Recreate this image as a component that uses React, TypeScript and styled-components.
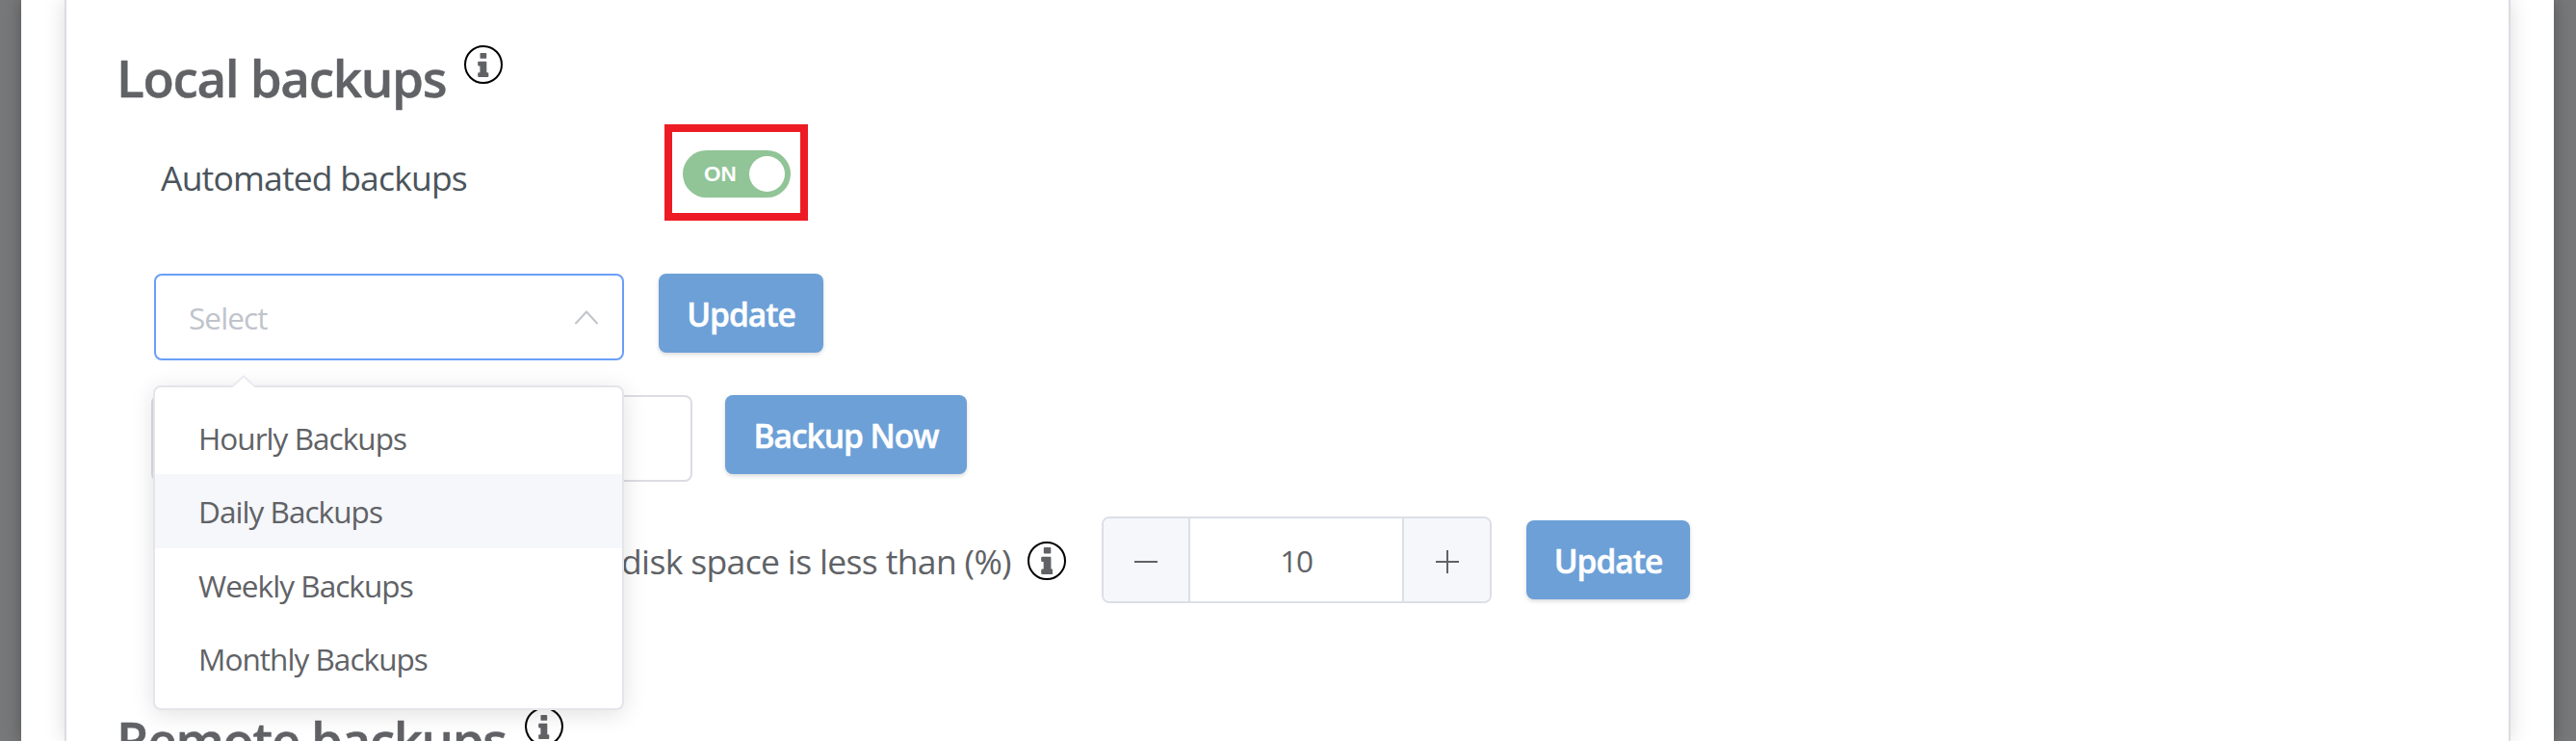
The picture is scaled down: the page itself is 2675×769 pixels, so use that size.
import React from "react";
import styled, { createGlobalStyle } from "styled-components";

const GlobalStyle = createGlobalStyle`
  *, *::before, *::after { box-sizing: border-box; }
  html, body { margin: 0; padding: 0; }
  body {
    background: #77787a;
    font-family: "Open Sans", "Noto Sans", sans-serif;
    color: #606266;
    overflow: hidden;
  }
`;

const Modal = styled.div`
  height: 769px;
  margin: 0 23px 0 22px;
  padding: 0 45px;
  background: #fff;
  box-shadow: 0 0 16px rgba(0, 0, 0, 0.3);
`;

const Card = styled.main`
  height: 769px;
  padding-top: 45px;
  background: #fff;
  border: solid #dcdce3;
  border-width: 0 2px;
  box-shadow: 0 0 20px rgba(0, 0, 0, 0.15);
  clip-path: inset(0 -24px);
`;

const HeadingRow = styled.header<{ $top?: number }>`
  display: flex;
  align-items: flex-start;
  height: 72px;
  margin: ${(p) => p.$top ?? 0}px 0 0 52px;
`;

const Heading = styled.h2<{ $width: number; $tracking: number }>`
  flex: none;
  width: ${(p) => p.$width}px;
  margin: 0;
  font-size: 53px;
  font-weight: 600;
  line-height: 72px;
  letter-spacing: ${(p) => p.$tracking}px;
  white-space: nowrap;
  -webkit-text-stroke: 0.4px currentColor;
`;

const Circle = styled.span<{ $top?: number }>`
  flex: none;
  display: flex;
  align-items: center;
  justify-content: center;
  width: 40px;
  height: 40px;
  margin-top: ${(p) => p.$top ?? 0}px;
  border: 2px solid #000;
  border-radius: 50%;
`;

const Row = styled.div<{ $top: number; $left: number; $center?: boolean }>`
  display: flex;
  align-items: ${(p) => (p.$center ? "center" : "flex-start")};
  margin: ${(p) => p.$top}px 0 0 ${(p) => p.$left}px;
`;

const ToggleLabel = styled.span`
  flex: none;
  width: 523px;
  padding-top: 31px;
  color: #4b545c;
  font-size: 35.5px;
  letter-spacing: -0.82px;
  white-space: nowrap;
`;

const Highlight = styled.div`
  flex: none;
  width: 149px;
  height: 100px;
  padding: 19px 0 0 11px;
  border: 8px solid #ed1c24;
`;

const Toggle = styled.div`
  display: flex;
  align-items: center;
  justify-content: space-between;
  width: 112px;
  height: 49px;
  padding: 0 6px 0 22px;
  border-radius: 25px;
  background: #91c497;
  color: #fff;
  font: 700 22.5px/50px "Liberation Sans", Arial, sans-serif;
`;

const Knob = styled.span`
  width: 37px;
  height: 37px;
  border-radius: 50%;
  background: #fff;
`;

const Select = styled.div`
  position: relative;
  display: flex;
  align-items: center;
  justify-content: space-between;
  width: 488px;
  height: 90px;
  margin-right: 36px;
  padding: 0 24px 0 34px;
  border: 2px solid #6a9ff8;
  border-radius: 8px;
  color: #c0c4cc;
  font-size: 31.5px;
  letter-spacing: -0.9px;
`;

const Menu = styled.ul`
  position: absolute;
  z-index: 2;
  top: 114px;
  left: -3px;
  width: 489px;
  height: 337px;
  margin: 0;
  padding: 14px 0 0;
  list-style: none;
  background: #fff;
  border: 2px solid #e4e4eb;
  border-radius: 8px;
  box-shadow: 0 4px 24px rgba(0, 0, 0, 0.12);
  color: #606266;
`;

const Arrow = styled.svg`
  position: absolute;
  top: -13px;
  left: 79px;
  display: block;
`;

const Option = styled.li<{ $active?: boolean }>`
  height: 76.4px;
  padding-left: 45px;
  line-height: 77.4px;
  letter-spacing: -0.95px;
  background: ${(p) => (p.$active ? "#f5f7fa" : "transparent")};
`;

const Button = styled.button<{ $width: number }>`
  flex: none;
  width: ${(p) => p.$width}px;
  height: 82px;
  padding: 2px 0 0;
  border: 0;
  border-radius: 8px;
  background: #6ca0d7;
  box-shadow: 0 2px 4px rgba(0, 0, 0, 0.15);
  color: #fff;
  font: 600 33.5px/80px "Open Sans", sans-serif;
  letter-spacing: -1px;
  -webkit-text-stroke: 0.5px currentColor;
`;

const NameInput = styled.div`
  width: 562px;
  height: 90px;
  margin-right: 34px;
  border: 2px solid #dcdce3;
  border-radius: 8px;
`;

const ThresholdLabel = styled.span`
  flex: none;
  width: 422px;
  padding-top: 2px;
  font-size: 35.5px;
  letter-spacing: -0.65px;
  white-space: nowrap;
`;

const Stepper = styled.div`
  display: grid;
  grid-template-columns: 90px 220px 91px;
  width: 405px;
  height: 90px;
  margin: 0 36px 0 37px;
  border: 2px solid #dcdfe6;
  border-radius: 8px;
  overflow: hidden;
`;

const StepButton = styled.span<{ $side: "left" | "right" }>`
  display: flex;
  align-items: center;
  justify-content: center;
  padding-top: 2px;
  background: #f5f7fa;
  border: 0 solid #dcdfe6;
  border-${(p) => (p.$side === "left" ? "right" : "left")}-width: 2px;
`;

const StepValue = styled.span`
  line-height: 86px;
  padding-top: 1px;
  text-align: center;
  font-size: 31.5px;
  letter-spacing: -1.2px;
`;

function InfoIcon({ size = 25, top }: { size?: number; top?: number }) {
  return (
    <Circle $top={top}>
      <svg width={(size * 12) / 26} height={size} viewBox="0 0 12 26" fill="#606266">
        <rect x="2.6" y="0" width="7" height="6" rx="0.9" />
        <path d="M1.2 9H8.8Q9.7 9 9.7 9.9V21H10.8Q11.8 21 11.8 22V25Q11.8 26 10.8 26H1.2Q.2 26 .2 25V22Q.2 21 1.2 21H2.5V14H1.2Q.2 14 .2 13V10Q.2 9 1.2 9Z" />
      </svg>
    </Circle>
  );
}

const schedules = ["Hourly Backups", "Daily Backups", "Weekly Backups", "Monthly Backups"];

export default function App() {
  return (
    <>
      <GlobalStyle />
      <Modal>
        <Card>
          <HeadingRow>
            <Heading $width={361} $tracking={-1.35}>Local backups</Heading>
            <InfoIcon top={2} />
          </HeadingRow>

          <Row $top={12} $left={98}>
            <ToggleLabel>Automated backups</ToggleLabel>
            <Highlight>
              <Toggle>
                ON
                <Knob />
              </Toggle>
            </Highlight>
          </Row>

          <Row $top={55} $left={91}>
            <Select>
              Select
              <svg width="26" height="18" viewBox="0 0 26 18" fill="none" stroke="#c0c4cc" strokeWidth="2" strokeLinecap="round">
                <path d="M2 15.5 13 3.5 24 15.5" />
              </svg>
              <Menu>
                <Arrow width="26" height="15" viewBox="0 0 26 15">
                  <path d="M1 13 13 1.5 25 13V15H1Z" fill="#fff" />
                  <path d="M1 12.5 13 1.5 25 12.5" fill="none" stroke="#e9ebf1" strokeWidth="2" />
                </Arrow>
                {schedules.map((name) => (
                  <Option key={name} $active={name === "Daily Backups"}>{name}</Option>
                ))}
              </Menu>
            </Select>
            <Button $width={171}>Update</Button>
          </Row>

          <Row $top={36} $left={88}>
            <NameInput />
            <Button $width={251}>Backup Now</Button>
          </Row>

          <Row $top={36} $left={576} $center>
            <ThresholdLabel>disk space is less than (%)</ThresholdLabel>
            <InfoIcon size={28} top={2} />
            <Stepper>
              <StepButton $side="left">
                <svg width="24" height="24" stroke="#606266" strokeWidth="2"><path d="M0 12H24" /></svg>
              </StepButton>
              <StepValue>10</StepValue>
              <StepButton $side="right">
                <svg width="24" height="24" stroke="#606266" strokeWidth="2"><path d="M0 12H24M12 0V24" /></svg>
              </StepButton>
            </Stepper>
            <Button $width={170}>Update</Button>
          </Row>

          <HeadingRow $top={106}>
            <Heading $width={424} $tracking={-1.5}>Remote backups</Heading>
            <InfoIcon top={2} />
          </HeadingRow>
        </Card>
      </Modal>
    </>
  );
}
